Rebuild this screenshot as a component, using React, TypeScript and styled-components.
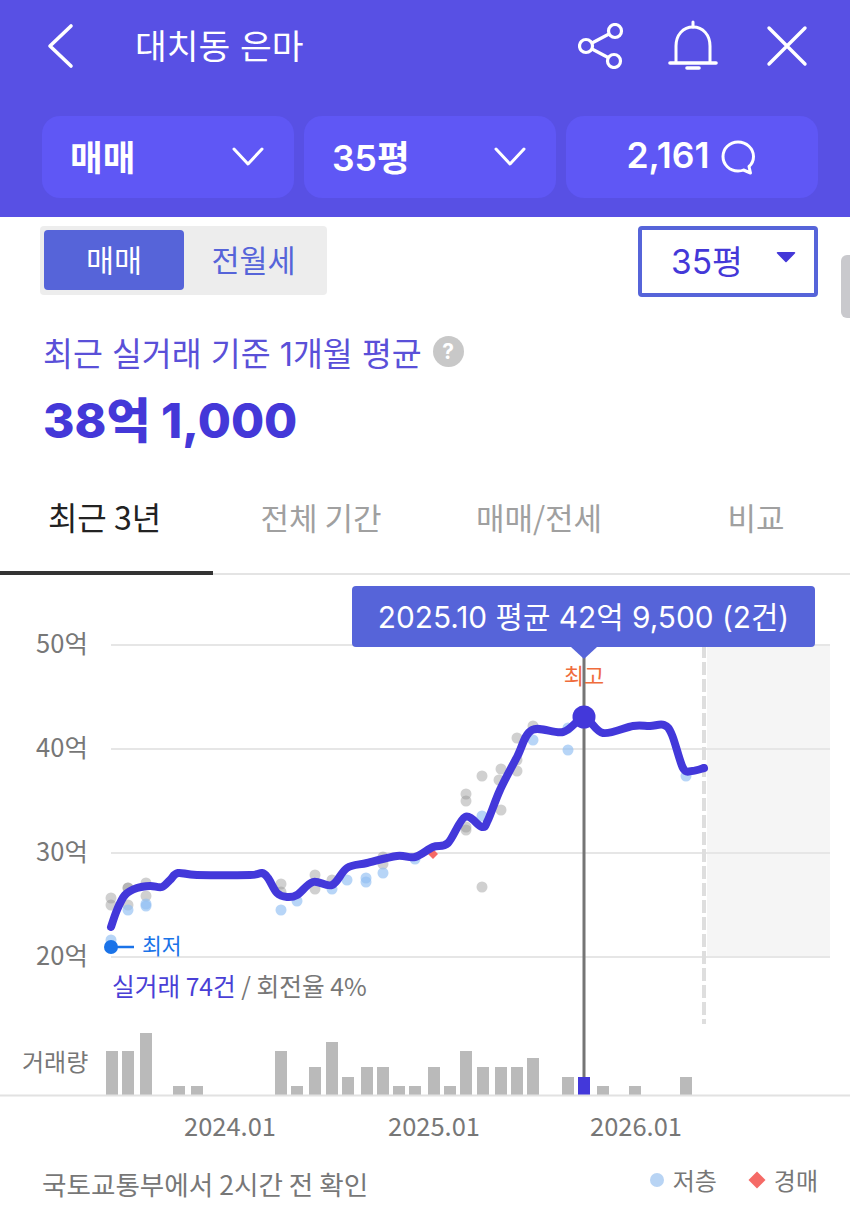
import React from 'react';
import styled, { createGlobalStyle } from 'styled-components';

const SANS = `Inter, "Noto Sans CJK KR", sans-serif`;
const NOTO = `"Noto Sans CJK KR", "Noto Sans", sans-serif`;

type Point = [number, number];

const LINE: Point[] = [
  [111, 927], [117, 910], [125, 895], [137, 888], [150, 886], [162, 887], [170, 880],
  [178, 873], [197, 875], [250, 875], [262, 873], [268, 878], [277, 893], [287, 897],
  [297, 895], [313, 882], [332, 885], [347, 868], [367, 863], [397, 856], [415, 857],
  [433, 847], [448, 843], [465, 817], [482, 827], [488, 820], [500, 790], [517, 757],
  [532, 730], [563, 732], [584, 718], [603, 733], [633, 726], [650, 726], [664, 725],
  [672, 735], [683, 768], [692, 771], [704, 768],
];

const GRAY_DOTS: Point[] = [
  [111, 898], [111, 905], [128, 888], [128, 888], [128, 905], [146, 883], [146, 896], [281, 884],
  [281, 892], [315, 875], [315, 889], [332, 880], [383, 857], [383, 864], [466, 794],
  [466, 801], [466, 830], [466, 827], [482, 776], [482, 887], [533, 726], [517, 738],
  [517, 760], [501, 769], [517, 771], [499, 780], [501, 810],
];

const BLUE_DOTS: Point[] = [
  [111, 940], [128, 910], [146, 906], [146, 904], [281, 910], [297, 901], [332, 889],
  [347, 880], [366, 878], [366, 882], [383, 873], [415, 859], [482, 816], [533, 740],
  [568, 750], [568, 728], [686, 776],
];

const BARS: { x: number; h: number; active?: boolean }[] = [
  { x: 106, h: 44 }, { x: 122, h: 44 }, { x: 140, h: 62 }, { x: 173, h: 9 }, { x: 191, h: 9 },
  { x: 275, h: 44 }, { x: 291, h: 9 }, { x: 309, h: 28 }, { x: 326, h: 53 }, { x: 342, h: 18 },
  { x: 361, h: 28 }, { x: 377, h: 28 }, { x: 393, h: 9 }, { x: 409, h: 9 }, { x: 428, h: 28 },
  { x: 444, h: 9 }, { x: 460, h: 44 }, { x: 477, h: 28 }, { x: 495, h: 28 }, { x: 511, h: 28 },
  { x: 527, h: 37 }, { x: 562, h: 18 }, { x: 578, h: 18, active: true }, { x: 597, h: 9 },
  { x: 629, h: 9 }, { x: 680, h: 18 },
];

const GRID_LINES = [
  { y: 645, label: '50억' },
  { y: 749, label: '40억' },
  { y: 853, label: '30억' },
  { y: 957, label: '20억' },
];

// catmull-rom through the measured points
const smoothPath = (pts: Point[]) => {
  let d = `M${pts[0][0]} ${pts[0][1]}`;
  for (let i = 0; i < pts.length - 1; i++) {
    const p0 = pts[i - 1] || pts[i];
    const p1 = pts[i];
    const p2 = pts[i + 1];
    const p3 = pts[i + 2] || p2;
    const c1x = p1[0] + (p2[0] - p0[0]) / 6;
    const c1y = p1[1] + (p2[1] - p0[1]) / 6;
    const c2x = p2[0] - (p3[0] - p1[0]) / 6;
    const c2y = p2[1] - (p3[1] - p1[1]) / 6;
    d += ` C${c1x.toFixed(1)} ${c1y.toFixed(1)} ${c2x.toFixed(1)} ${c2y.toFixed(1)} ${p2[0]} ${p2[1]}`;
  }
  return d;
};

const ChevronDown = () => (
  <svg width="32" height="20" viewBox="0 0 32 20" fill="none" stroke="#fff" strokeWidth="3" strokeLinecap="round" strokeLinejoin="round">
    <path d="M2 2l14 15L30 2" />
  </svg>
);

const App = () => (
  <Page>
    <GlobalStyle />
    <Header>
      <TopBar>
        <BackButton>
          <svg width="30" height="46" viewBox="0 0 30 46" fill="none" stroke="#fff" strokeWidth="3.6" strokeLinecap="round" strokeLinejoin="round">
            <path d="M26 3L5 23l21 20" />
          </svg>
        </BackButton>
        <Title>대치동 은마</Title>
        <Actions>
          <svg width="46" height="46" viewBox="0 0 46 46" fill="none" stroke="#fff" strokeWidth="3.2">
            <circle cx="37" cy="8" r="6.5" />
            <circle cx="8" cy="23" r="6.5" />
            <circle cx="36" cy="38" r="6.5" />
            <path d="M14 20l17-9M14 26l17 9" />
          </svg>
          <svg width="52" height="52" viewBox="0 0 52 52" fill="none" stroke="#fff" strokeWidth="3" strokeLinecap="round">
            <path d="M26 2v5" />
            <path d="M9 42V26C9 15 16 7 26 7s17 8 17 19v16" />
            <path d="M3 43h46" strokeWidth="3.6" />
            <path d="M20 48h12" strokeWidth="3.6" />
          </svg>
          <svg width="42" height="42" viewBox="0 0 42 42" fill="none" stroke="#fff" strokeWidth="3.4" strokeLinecap="round">
            <path d="M3 3l36 36M39 3L3 39" />
          </svg>
        </Actions>
      </TopBar>
      <FilterRow>
        <FilterButton>
          <FilterText>매매</FilterText>
          <ChevronDown />
        </FilterButton>
        <FilterButton>
          <FilterText>35평</FilterText>
          <ChevronDown />
        </FilterButton>
        <FilterButton $center>
          <FilterText>2,161</FilterText>
          <svg width="36" height="36" viewBox="0 0 36 36" fill="none" stroke="#fff" strokeWidth="3" strokeLinejoin="round">
            <path d="M18 3C9.5 3 3 9.5 3 17.5S9.5 32 18 32c2 0 4-.3 5.5-1l7 3-1.5-6.5c3-2.600 4.500-6 4.500-10C33.500 9.500 26.500 3 18 3z" />
          </svg>
        </FilterButton>
      </FilterRow>
    </Header>

    <Controls>
      <Segment>
        <SegmentItem $active>매매</SegmentItem>
        <SegmentItem>전월세</SegmentItem>
      </Segment>
      <SizeSelect>
        <span>35평</span>
        <Caret viewBox="0 0 20 12">
          <path d="M1.500 1h17a.8.8 0 0 1 .6 1.300L10.600 11a.8.8 0 0 1-1.200 0L.9 2.300A.8.8 0 0 1 1.500 1z" fill="#4438d8" />
        </Caret>
      </SizeSelect>
    </Controls>
    <ScrollThumb />

    <Summary>
      <SummaryLabel>
        최근 실거래 기준 1개월 평균
        <HelpBadge>?</HelpBadge>
      </SummaryLabel>
      <Price>38억 1,000</Price>
    </Summary>

    <Tabs>
      <Tab $active>최근 3년</Tab>
      <Tab>전체 기간</Tab>
      <Tab>매매/전세</Tab>
      <Tab>비교</Tab>
    </Tabs>

    <ChartArea>
      <svg width="850" height="575" viewBox="0 575 850 575">
        <rect x="707" y="645" width="123" height="312" fill="#f5f5f5" />
        {GRID_LINES.map((g) => (
          <g key={g.y}>
            <line x1="111" x2="830" y1={g.y} y2={g.y} stroke="#e6e6e6" strokeWidth="2" />
            <AxisText x="62" y={g.y + 8} textAnchor="middle">{g.label}</AxisText>
          </g>
        ))}
        <line x1="704" x2="704" y1="645" y2="1024" stroke="#dedede" strokeWidth="4" strokeDasharray="13 4" />

        {GRAY_DOTS.map(([x, y], i) => (
          <circle key={i} cx={x} cy={y} r="5.5" fill="#8f8f8f" fillOpacity="0.42" />
        ))}
        {BLUE_DOTS.map(([x, y], i) => (
          <circle key={i} cx={x} cy={y} r="5.5" fill="#90bff2" fillOpacity="0.65" />
        ))}
        <path d="M433 849l5 5-5 5-5-5z" fill="#f56a66" />

        <line x1="584" x2="584" y1="655" y2="1095" stroke="#757575" strokeWidth="3" />
        <PeakText x="584" y="684" textAnchor="middle">최고</PeakText>
        <path d={smoothPath(LINE)} fill="none" stroke="#4338da" strokeWidth="8" strokeLinecap="round" strokeLinejoin="round" />
        <circle cx="584" cy="717" r="11.500" fill="#4338da" />

        <circle cx="111" cy="947" r="7" fill="#1a73e8" />
        <line x1="111" x2="134" y1="947" y2="947" stroke="#1a73e8" strokeWidth="2.500" />
        <LowText x="142" y="954">최저</LowText>

        <StatText x="112" y="996">
          <tspan fill="#4a3fd6">실거래 74건</tspan> / 회전율 4%
        </StatText>

        <VolumeText x="22" y="1071">거래량</VolumeText>
        {BARS.map((b) => (
          <rect key={b.x} x={b.x} y={1095 - b.h} width="12" height={b.h} fill={b.active ? '#4338da' : '#bababa'} />
        ))}
        <line x1="0" x2="850" y1="1095.500" y2="1095.500" stroke="#e2e2e2" strokeWidth="2" />

        <AxisText x="230" y="1136" textAnchor="middle">2024.01</AxisText>
        <AxisText x="434" y="1136" textAnchor="middle">2025.01</AxisText>
        <AxisText x="636" y="1136" textAnchor="middle">2026.01</AxisText>
      </svg>
      <Tooltip>2025.10 평균 42억 9,500 (2건)</Tooltip>
    </ChartArea>

    <Footer>
      <Source>국토교통부에서 2시간 전 확인</Source>
      <Legend>
        <LegendItem>
          <LegendDot />
          저층
        </LegendItem>
        <LegendItem>
          <LegendDiamond />
          경매
        </LegendItem>
      </Legend>
    </Footer>
  </Page>
);

const GlobalStyle = createGlobalStyle`
  html, body {
    margin: 0;
    padding: 0;
    background: #fff;
    overflow: hidden;
  }
`;

const Page = styled.div`
  position: relative;
  width: 850px;
  height: 1214px;
  overflow: hidden;
  background: #fff;
  font-family: ${SANS};
`;

const Header = styled.header`
  height: 217px;
  box-sizing: border-box;
  background: #5850e4;
  padding: 0 32px 0 42px;
`;

const TopBar = styled.div`
  height: 92px;
  display: flex;
  align-items: center;
  margin-bottom: 24px;
`;

const BackButton = styled.div`
  display: flex;
  width: 93px;
  padding-left: 3px;
  box-sizing: border-box;
`;

const Title = styled.h1`
  margin: 0 0 4px;
  font-size: 34.5px;
  font-weight: 400;
  color: #fff;
`;

const Actions = styled.div`
  margin-left: auto;
  display: flex;
  align-items: center;
  gap: 45px;
  padding-right: 10px;

  svg:nth-child(2) {
    margin-left: -2px;
    margin-right: 2px;
  }
`;

const FilterRow = styled.div`
  display: grid;
  grid-template-columns: repeat(3, 252px);
  gap: 10px;
`;

const FilterButton = styled.div<{ $center?: boolean }>`
  height: 82px;
  box-sizing: border-box;
  padding: 0 30px 0 28px;
  border-radius: 18px;
  background: #5f57f5;
  color: #fff;
  display: flex;
  align-items: center;
  justify-content: ${({ $center }) => ($center ? 'center' : 'space-between')};
  gap: ${({ $center }) => ($center ? '10px' : '0')};
`;

const FilterText = styled.span`
  font-size: 35.5px;
  font-weight: 600;
  margin-bottom: 4px;
`;

const Controls = styled.div`
  display: flex;
  justify-content: space-between;
  align-items: flex-start;
  padding: 9px 32px 0 40px;
`;

const Segment = styled.div`
  display: flex;
  width: 287px;
  height: 69px;
  box-sizing: border-box;
  padding: 4px;
  border-radius: 4px;
  background: #ededed;
`;

const SegmentItem = styled.div<{ $active?: boolean }>`
  width: ${({ $active }) => ($active ? '140px' : '139px')};
  height: 60px;
  padding-bottom: 3px;
  box-sizing: border-box;
  border-radius: 4px;
  background: ${({ $active }) => ($active ? '#5664d9' : 'transparent')};
  color: ${({ $active }) => ($active ? '#fff' : '#5664d9')};
  font-size: 30.5px;
  display: flex;
  align-items: center;
  justify-content: center;
`;

const SizeSelect = styled.div`
  position: relative;
  width: 180px;
  height: 71px;
  box-sizing: border-box;
  border: 4px solid #5664d9;
  border-radius: 4px;
  padding: 0 0 4px 29px;
  color: #4438d8;
  font-size: 33.5px;
  display: flex;
  align-items: center;
`;

const Caret = styled.svg`
  position: absolute;
  top: 21px;
  right: 18px;
  width: 20px;
  height: 12px;
`;

const ScrollThumb = styled.div`
  position: absolute;
  top: 255px;
  right: -8px;
  width: 17px;
  height: 63px;
  border-radius: 6px;
  background: #c9c9cd;
`;

const Summary = styled.div`
  padding: 30px 0 0 43px;
`;

const SummaryLabel = styled.div`
  height: 48px;
  display: flex;
  align-items: center;
  gap: 11px;
  color: #5a50d8;
  font-size: 32.5px;
`;

const HelpBadge = styled.span`
  width: 31px;
  height: 31px;
  border-radius: 50%;
  background: #c8c8c8;
  color: #fff;
  font-size: 21px;
  font-weight: 700;
  display: flex;
  align-items: center;
  justify-content: center;
`;

const Price = styled.div`
  margin-top: 14px;
  height: 64px;
  line-height: 64px;
  color: #4438d8;
  font-size: 48px;
  font-weight: 800;
`;

const Tabs = styled.nav`
  margin-top: 13px;
  height: 109px;
  box-sizing: border-box;
  display: grid;
  grid-template-columns: 213px 216px 220px 214px;
  border-bottom: 2px solid #e4e4e4;
`;

const Tab = styled.div<{ $active?: boolean }>`
  padding: 0 ${({ $active }) => ($active ? '4px' : '0')} 5px 0;
  box-sizing: border-box;
  display: flex;
  align-items: center;
  justify-content: center;
  font-family: ${NOTO};
  font-size: ${({ $active }) => ($active ? '32px' : '31px')};
  color: ${({ $active }) => ($active ? '#222' : '#a0a0a0')};
  border-bottom: 4px solid ${({ $active }) => ($active ? '#333' : 'transparent')};
  margin-bottom: -2px;
`;

const ChartArea = styled.section`
  position: relative;
  height: 575px;

  svg {
    display: block;
  }
`;

const AxisText = styled.text`
  font-family: ${NOTO};
  font-size: 25.5px;
  fill: #777;
`;

const PeakText = styled.text`
  font-family: ${NOTO};
  font-size: 22px;
  fill: #ef6c3c;
`;

const LowText = styled.text`
  font-family: ${NOTO};
  font-size: 21.5px;
  fill: #1a73e8;
`;

const StatText = styled.text`
  font-family: ${NOTO};
  font-size: 24.7px;
  fill: #777;
`;

const VolumeText = styled.text`
  font-family: ${NOTO};
  font-size: 24px;
  fill: #777;
`;

const Tooltip = styled.div`
  position: absolute;
  top: 11px;
  left: 352px;
  width: 463px;
  height: 61px;
  padding-bottom: 3px;
  box-sizing: border-box;
  border-radius: 4px;
  background: #5664d9;
  color: #fff;
  font-family: ${SANS};
  font-size: 29.800px;
  display: flex;
  align-items: center;
  justify-content: center;

  &::after {
    content: '';
    position: absolute;
    left: 219px;
    top: 61px;
    border-left: 13px solid transparent;
    border-right: 13px solid transparent;
    border-top: 12px solid #5664d9;
  }
`;

const Footer = styled.footer`
  height: 64px;
  box-sizing: border-box;
  padding: 0 32px 0 42px;
  display: flex;
  align-items: flex-start;
  justify-content: space-between;
  font-family: ${NOTO};
  color: #777;
`;

const Source = styled.div`
  font-size: 26.6px;
  line-height: 68px;
`;

const Legend = styled.div`
  display: flex;
  gap: 32px;
  padding-top: 10px;
`;

const LegendItem = styled.div`
  display: flex;
  align-items: center;
  gap: 9px;
  font-size: 24px;
  line-height: 40px;
`;

const LegendDot = styled.span`
  width: 14px;
  height: 14px;
  border-radius: 50%;
  background: #b8d4f4;
`;

const LegendDiamond = styled.span`
  width: 12px;
  height: 12px;
  margin: 0 2px;
  transform: rotate(45deg);
  background: #f56a66;
`;

export default App;
